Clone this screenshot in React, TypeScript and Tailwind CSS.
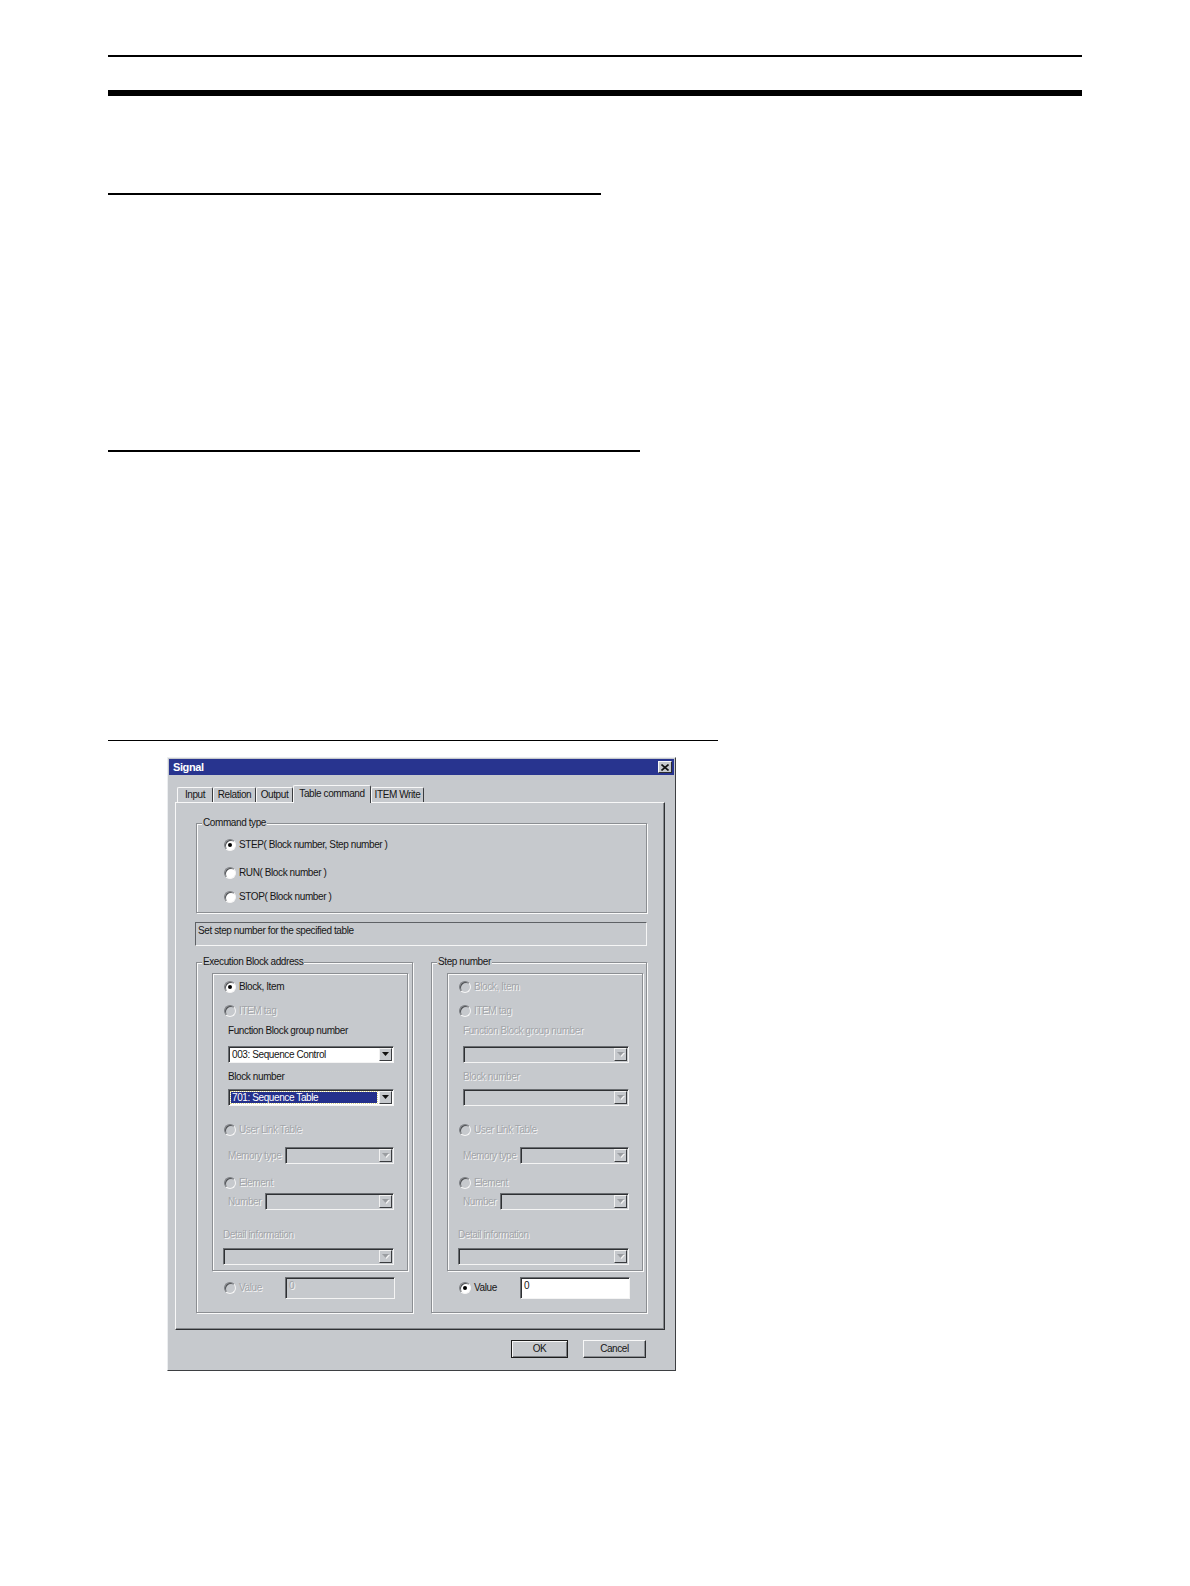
import React from "react";

const FACE = "bg-[#c6c9cd]";
const GROUP =
  "border border-[#8b8e92] shadow-[inset_1px_1px_0_#fafafa,1px_1px_0_#fafafa] min-w-0";
const LEGEND = `ml-[5px] px-[1px] leading-[12px] ${FACE}`;

function T({
  children,
  disabled = false,
  className = "",
}: {
  children: React.ReactNode;
  disabled?: boolean;
  className?: string;
}) {
  return (
    <span
      className={`text-[10px] leading-[12px] tracking-[-0.4px] whitespace-nowrap ${
        disabled ? "text-[#a2a5a9] [text-shadow:1px_1px_0_#f6f6f6]" : "text-[#161616]"
      } ${className}`}
    >
      {children}
    </span>
  );
}

function Radio({ checked = false, disabled = false }: { checked?: boolean; disabled?: boolean }) {
  return (
    <span
      className={`relative block w-[12px] h-[12px] shrink-0 rounded-full border border-t-[#7c7f83] border-l-[#7c7f83] border-b-[#f6f6f6] border-r-[#f6f6f6] shadow-[inset_1px_1px_0_#505255] ${
        disabled ? FACE : "bg-white"
      }`}
    >
      {checked && (
        <span className="absolute left-[3px] top-[3px] w-[4px] h-[4px] rounded-full bg-black" />
      )}
    </span>
  );
}

function RadioRow({
  label,
  checked = false,
  disabled = false,
  className = "",
}: {
  label: string;
  checked?: boolean;
  disabled?: boolean;
  className?: string;
}) {
  return (
    <div className={`flex items-center gap-[3px] h-[12px] ${className}`}>
      <Radio checked={checked} disabled={disabled} />
      <T disabled={disabled}>{label}</T>
    </div>
  );
}

function Arrow({ disabled = false }: { disabled?: boolean }) {
  return (
    <div
      className={`my-[1px] mr-[1px] w-[13px] shrink-0 flex items-center justify-center ${FACE} border border-t-[#f2f2f2] border-l-[#f2f2f2] border-b-[#3a3c3f] border-r-[#3a3c3f]`}
    >
      <svg width="8" height="5" viewBox="0 0 8 5">
        {disabled && <polygon points="1,1 8,1 4.5,5" fill="#f4f4f4" />}
        <polygon points="0,0 7,0 3.5,4" fill={disabled ? "#9a9da1" : "#111"} />
      </svg>
    </div>
  );
}

function Combo({
  className = "",
  value = "",
  selected = false,
  disabled = false,
}: {
  className?: string;
  value?: string;
  selected?: boolean;
  disabled?: boolean;
}) {
  return (
    <div
      className={`flex h-[17px] items-stretch border border-t-[#6b6e72] border-l-[#6b6e72] border-b-[#f4f4f4] border-r-[#f4f4f4] shadow-[inset_1px_1px_0_#2e3033] ${
        disabled ? FACE : "bg-white"
      } ${className}`}
    >
      <div className="flex-1 min-w-0 flex items-center pl-[2px] pr-[2px] py-[2px]">
        {value &&
          (selected ? (
            <span className="flex items-center h-full w-full bg-[#24308c] outline outline-1 outline-dotted outline-[#d8d48a] pl-[1px]">
              <span className="text-[10px] leading-[12px] tracking-[-0.4px] whitespace-nowrap text-white">
                {value}
              </span>
            </span>
          ) : (
            <T className="pl-[1px]">{value}</T>
          ))}
      </div>
      <Arrow disabled={disabled} />
    </div>
  );
}

function Column({ title, enabled }: { title: string; enabled: boolean }) {
  const d = !enabled;
  return (
    <fieldset className={`${GROUP} ${enabled ? "w-[217px]" : "w-[216px]"} h-[357px]`}>
      <legend className={LEGEND}>
        <T>{title}</T>
      </legend>
      <div className={`${GROUP} mt-[5px] ml-[15px] w-[196px] h-[298px] pt-[7px]`}>
        <RadioRow className="ml-[11px]" checked={enabled} disabled={d} label="Block, Item" />
        <RadioRow className="ml-[11px] mt-[12px]" disabled label="ITEM tag" />
        <T disabled={d} className="block ml-[15px] mt-[8px]">
          Function Block group number
        </T>
        <Combo
          className="ml-[15px] mt-[9px] w-[166px]"
          value={enabled ? "003: Sequence Control" : ""}
          disabled={d}
        />
        <T disabled={d} className="block ml-[15px] mt-[8px]">
          Block number
        </T>
        <Combo
          className="ml-[15px] mt-[6px] w-[166px]"
          value={enabled ? "701: Sequence Table" : ""}
          selected={enabled}
          disabled={d}
        />
        <RadioRow className="ml-[11px] mt-[18px]" disabled label="User Link Table" />
        <div className="flex items-center ml-[15px] mt-[11px]">
          <T disabled className="w-[57px]">
            Memory type
          </T>
          <Combo className="w-[109px]" disabled />
        </div>
        <RadioRow className="ml-[11px] mt-[13px]" disabled label="Element" />
        <div className="flex items-center ml-[15px] mt-[4px]">
          <T disabled className="w-[37px]">
            Number
          </T>
          <Combo className="w-[129px]" disabled />
        </div>
        <T disabled className="block ml-[10px] mt-[19px]">
          Detail information
        </T>
        <Combo className="ml-[10px] mt-[7px] w-[171px]" disabled />
      </div>
      <div className="flex items-center ml-[27px] mt-[6px]">
        <div className="flex items-center gap-[3px] w-[61px]">
          <Radio checked={!enabled} disabled={enabled} />
          <T disabled={enabled}>Value</T>
        </div>
        <div
          className={`flex items-start h-[22px] w-[110px] pl-[3px] pt-[2px] border border-t-[#6b6e72] border-l-[#6b6e72] border-b-[#f4f4f4] border-r-[#f4f4f4] shadow-[inset_1px_1px_0_#2e3033] ${
            enabled ? FACE : "bg-white"
          }`}
        >
          <T disabled={enabled}>0</T>
        </div>
      </div>
    </fieldset>
  );
}

function Tab({
  label,
  active = false,
  className = "",
}: {
  label: string;
  active?: boolean;
  className?: string;
}) {
  return (
    <div
      className={`flex items-center justify-center rounded-t-[2px] border-t border-l border-r border-t-[#f8f8f8] border-l-[#f8f8f8] border-r-[#3a3c3f] ${FACE} ${
        active ? "h-[18px] -mb-[1px] relative z-10 pb-[2px]" : "h-[15px]"
      } ${className}`}
    >
      <T>{label}</T>
    </div>
  );
}

function Button({ label, def = false, className = "" }: { label: string; def?: boolean; className?: string }) {
  return (
    <div
      className={`h-[18px] flex items-center justify-center ${FACE} ${
        def
          ? "border border-[#1c1c1c] shadow-[inset_1px_1px_0_#f8f8f8,inset_-1px_-1px_0_#7a7d81]"
          : "border border-t-[#f8f8f8] border-l-[#f8f8f8] border-b-[#2a2c2f] border-r-[#2a2c2f] shadow-[inset_-1px_-1px_0_#8a8d91]"
      } ${className}`}
    >
      <T>{label}</T>
    </div>
  );
}

export default function App() {
  return (
    <div className="w-[1190px] h-[1586px] bg-white overflow-hidden text-[10px] leading-[12px] font-['Liberation_Sans',Arial,sans-serif]">
      <div className="ml-[108px] w-[974px] flex flex-col">
        <div className="h-[2px] bg-black mt-[55px]" />
        <div className="h-[6px] bg-black mt-[33px]" />
        <div className="h-[2px] w-[493px] bg-black mt-[97px]" />
        <div className="h-[2px] w-[532px] bg-black mt-[255px]" />
        <div className="h-px w-[610px] bg-black mt-[288px]" />

        {/* Dialog */}
        <div
          className={`ml-[59px] mt-[16px] w-[509px] h-[614px] ${FACE} border border-t-[#eceef0] border-l-[#eceef0] border-r-[#3d3f42] border-b-[#3d3f42] flex flex-col`}
        >
          <div className="mx-[1px] mt-[1px] h-[16px] bg-[#28348f] flex items-center justify-between pl-[4px] pr-[2px]">
            <span className="text-white font-bold text-[11px] leading-[14px] tracking-[-0.4px]">Signal</span>
            <div
              className={`w-[14px] h-[12px] flex items-center justify-center ${FACE} border border-t-[#f8f8f8] border-l-[#f8f8f8] border-b-[#2a2c2f] border-r-[#2a2c2f]`}
            >
              <svg width="8" height="7" viewBox="0 0 8 7">
                <path d="M0.5 0.5 L7.5 6.5 M7.5 0.5 L0.5 6.5" stroke="#111" strokeWidth="1.6" />
              </svg>
            </div>
          </div>

          <div className="mt-[10px] ml-[9px] flex items-end h-[17px]">
            <Tab label="Input" className="w-[36px]" />
            <Tab label="Relation" className="w-[43px]" />
            <Tab label="Output" className="w-[37px]" />
            <Tab label="Table command" active className="w-[78px]" />
            <Tab label="ITEM Write" className="w-[53px]" />
          </div>

          <div
            className={`ml-[7px] w-[490px] h-[528px] border border-t-[#f8f8f8] border-l-[#f8f8f8] border-b-[#2f3134] border-r-[#2f3134] shadow-[inset_-1px_-1px_0_#85888c] flex flex-col`}
          >
            <fieldset className={`${GROUP} ml-[20px] mt-[14px] w-[451px] h-[96px]`}>
              <legend className={LEGEND}>
                <T>Command type</T>
              </legend>
              <RadioRow className="ml-[27px] mt-[10px]" checked label="STEP( Block number, Step number )" />
              <RadioRow className="ml-[27px] mt-[16px]" label="RUN( Block number )" />
              <RadioRow className="ml-[27px] mt-[12px]" label="STOP( Block number )" />
            </fieldset>

            <div className="flex items-start ml-[19px] mt-[9px] w-[452px] h-[24px] pl-[2px] pt-[2px] border border-t-[#5e6165] border-l-[#5e6165] border-b-[#f6f6f6] border-r-[#f6f6f6]">
              <T>Set step number for the specified table</T>
            </div>

            <div className="ml-[20px] mt-[10px] flex gap-[18px]">
              <Column title="Execution Block address" enabled />
              <Column title="Step number" enabled={false} />
            </div>
          </div>

          <div className="mt-[10px] mr-[29px] flex justify-end gap-[15px]">
            <Button label="OK" def className="w-[57px]" />
            <Button label="Cancel" className="w-[63px]" />
          </div>
        </div>
      </div>
    </div>
  );
}
